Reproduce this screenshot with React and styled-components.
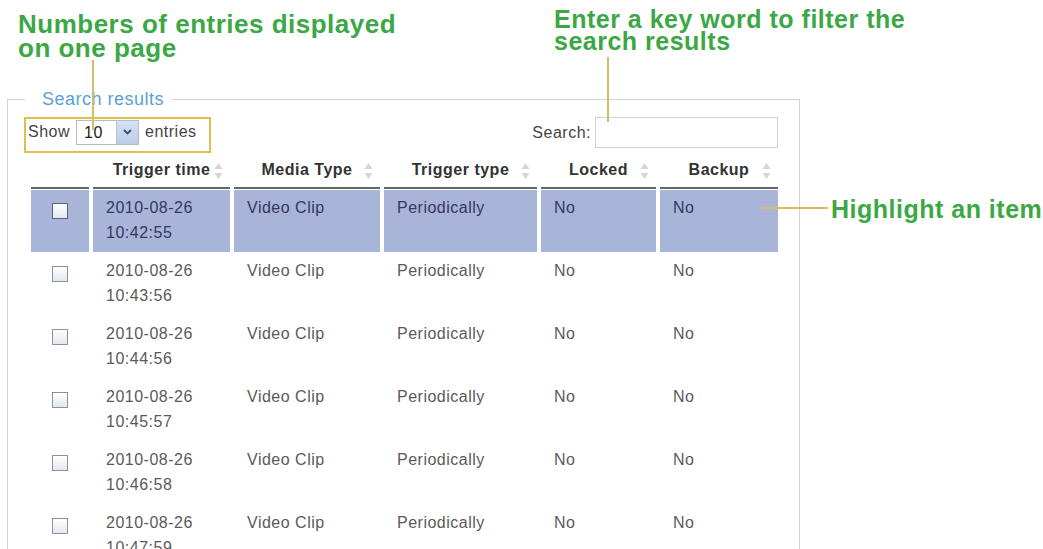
import React from 'react';
import styled, { createGlobalStyle } from 'styled-components';

const GlobalStyle = createGlobalStyle`
  body {
    margin: 0;
    background: #fff;
    font-family: "Liberation Sans", Arial, sans-serif;
  }
`;

// page frame, callouts are laid over it
const Page = styled.div`
  position: relative;
  width: 1043px;
  padding: 0 0 0 7px;
  box-sizing: border-box;
`;

const NoteBand = styled.div`
  display: flex;
  height: 90px;
  padding-left: 11px;
`;

const Note = styled.div`
  width: ${(p) => p.$width || 'auto'};
  padding-top: ${(p) => p.$top || 0}px;
  color: #3ba845;
  font-weight: bold;
  font-size: ${(p) => p.$size || 24}px;
  line-height: ${(p) => p.$line || 21}px;
  letter-spacing: 0.5px;
`;

const SideNote = styled.div`
  position: absolute;
  left: 831px;
  top: 196px;
  color: #3ba845;
  font-weight: bold;
  font-size: 25px;
  line-height: 26px;
  letter-spacing: 0.5px;
  white-space: nowrap;
`;

const Leader = styled.div`
  position: absolute;
  left: ${(p) => p.$x}px;
  top: ${(p) => p.$y}px;
  width: ${(p) => p.$w}px;
  height: ${(p) => p.$h}px;
  background: #d9bb63;
  z-index: 2;
`;

const Fieldset = styled.fieldset`
  width: 793px;
  box-sizing: border-box;
  margin: 0;
  padding: 9px 21px 0 16px;
  border: 1px solid #d4d4d4;
  min-width: 0;
`;

const Legend = styled.legend`
  margin-left: 1px;
  padding: 0 8px 0 17px;
  color: #5b9fd6;
  font-size: 18px;
  line-height: 18px;
  letter-spacing: 0.5px;
`;

const Controls = styled.div`
  display: flex;
  justify-content: space-between;
  align-items: flex-start;
  font-size: 16px;
  letter-spacing: 0.5px;
  color: #444;
`;

const LengthBox = styled.div`
  display: flex;
  align-items: center;
  gap: 6px;
  height: 26px;
  padding: 0 12px 6px 2px;
  border: 2px solid ${(p) => (p.$marked ? '#dfc04e' : 'transparent')};
`;

const Select = styled.div`
  display: flex;
  width: 63px;
  height: 25px;
  box-sizing: border-box;
  border: 1px solid #b4bccb;
  background: #fff;
`;

const SelectValue = styled.span`
  flex: 1;
  padding-left: 7px;
  line-height: 23px;
  color: #222;
`;

const SelectArrow = styled.span`
  display: flex;
  align-items: center;
  justify-content: center;
  width: 21px;
  background: linear-gradient(#d6e1f3, #bccbe8);
  border-left: 1px solid #b4c2dc;
`;

const SearchLabel = styled.label`
  display: flex;
  align-items: center;
  gap: 4px;
`;

const SearchInput = styled.input`
  width: 183px;
  height: 31px;
  box-sizing: border-box;
  border: 1px solid #d2d2d2;
  font: inherit;
`;

const Table = styled.table`
  table-layout: fixed;
  width: 754px;
  margin: 4px 0 0 3px;
  border-collapse: separate;
  border-spacing: 4px 1px;
  font-size: 16px;
  letter-spacing: 0.5px;
`;

const Th = styled.th`
  position: relative;
  width: ${(p) => p.$w}px;
  box-sizing: border-box;
  padding: 3px 0 8px;
  line-height: 18px;
  text-align: center;
  color: #333;
  font-weight: bold;
  border-bottom: 2px solid #666;
`;

const SortMark = styled.svg`
  position: absolute;
  right: 7px;
  top: 4px;
`;

const Row = styled.tr`
  background: ${(p) => (p.$active ? '#a9b4d9' : 'transparent')};
  color: ${(p) => (p.$active ? '#35385c' : '#5a5a5a')};
`;

const Td = styled.td`
  vertical-align: top;
  padding: 5px 13px 7px;
  line-height: 25px;
  text-align: ${(p) => (p.$center ? 'center' : 'left')};
`;

const Check = styled.span`
  display: inline-block;
  width: 16px;
  height: 16px;
  margin-top: 8px;
  box-sizing: border-box;
  border: 1px solid ${(p) => (p.$active ? '#5a6078' : '#8c929c')};
  background: linear-gradient(#ffffff, #e3e7ee);
`;

const columns = [
  { key: 'check', label: '', w: 58 },
  { key: 'time', label: 'Trigger time', w: 137 },
  { key: 'media', label: 'Media Type', w: 146 },
  { key: 'trigger', label: 'Trigger type', w: 153 },
  { key: 'locked', label: 'Locked', w: 115 },
  { key: 'backup', label: 'Backup', w: 118 },
];

const times = ['10:42:55', '10:43:56', '10:44:56', '10:45:57', '10:46:58', '10:47:59'];

function Sort() {
  return (
    <SortMark width="9" height="18" viewBox="0 0 9 18">
      <path d="M4.5 1 L8.5 7 L0.5 7 Z" fill="#d6d6d6" />
      <path d="M4.5 17 L8.5 11 L0.5 11 Z" fill="#d6d6d6" />
    </SortMark>
  );
}

export default function App() {
  return (
    <>
      <GlobalStyle />
      <Page>
        <NoteBand>
          <Note $width="536px" $top={12} $size={26} $line={24}>
            Numbers of entries displayed
            <br />
            on one page
          </Note>
          <Note $top={8} $size={25} $line={22}>
            Enter a key word to filter the
            <br />
            search results
          </Note>
        </NoteBand>

        <Leader $x={92} $y={60} $w={2} $h={70} />
        <Leader $x={607} $y={57} $w={2} $h={65} />
        <Leader $x={760} $y={207} $w={68} $h={2} />
        <SideNote>Highlight an item</SideNote>

        <Fieldset>
          <Legend>Search results</Legend>
          <Controls>
            <LengthBox $marked>
              <span>Show</span>
              <Select>
                <SelectValue>10</SelectValue>
                <SelectArrow>
                  <svg width="9" height="6" viewBox="0 0 9 6">
                    <path d="M1 1 L4.5 4.5 L8 1" stroke="#2f4f8f" strokeWidth="1.8" fill="none" />
                  </svg>
                </SelectArrow>
              </Select>
              <span>entries</span>
            </LengthBox>
            <SearchLabel>
              Search:
              <SearchInput type="text" />
            </SearchLabel>
          </Controls>

          <Table>
            <thead>
              <tr>
                {columns.map((c) => (
                  <Th key={c.key} $w={c.w}>
                    {c.label}
                    {c.label && <Sort />}
                  </Th>
                ))}
              </tr>
            </thead>
            <tbody>
              {times.map((t, i) => (
                <Row key={t} $active={i === 0}>
                  <Td $center>
                    <Check $active={i === 0} />
                  </Td>
                  <Td>
                    2010-08-26
                    <br />
                    {t}
                  </Td>
                  <Td>Video Clip</Td>
                  <Td>Periodically</Td>
                  <Td>No</Td>
                  <Td>No</Td>
                </Row>
              ))}
            </tbody>
          </Table>
        </Fieldset>
      </Page>
    </>
  );
}
